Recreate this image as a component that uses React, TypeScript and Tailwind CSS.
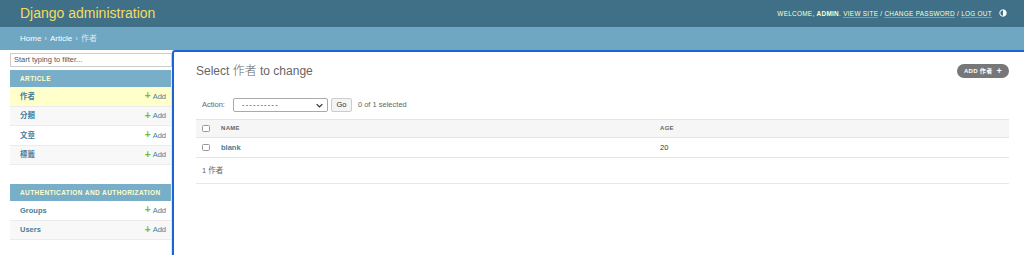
import React from 'react';

const font = { fontFamily: '"Liberation Sans", "Noto Sans CJK TC", Arial, sans-serif' };

const articleModels = ['作者', '分類', '文章', '標籤'];
const authModels = ['Groups', 'Users'];

function AddLink() {
  return (
    <span className="flex items-center gap-[2px] text-[7.5px] text-[#447e9b]">
      <span className="text-[10px] font-bold leading-none text-[#70bf2b]">+</span>
      Add
    </span>
  );
}

function ModelRow({ name, index, current }: { name: string; index: number; current?: boolean }) {
  const bg = current ? 'bg-[#ffffcc]' : index % 2 === 1 ? 'bg-[#f8f8f8]' : 'bg-white';
  return (
    <div className={`flex h-[19.5px] items-center justify-between border-b border-[#ececec] pl-[10px] pr-[5px] ${bg}`}>
      <span className="text-[7.5px] font-semibold text-[#447e9b]">{name}</span>
      <AddLink />
    </div>
  );
}

function ModuleHeader({ title }: { title: string }) {
  return (
    <div className="flex h-[17px] items-center bg-[#79aec8] pl-[10px] text-[6.5px] font-bold uppercase tracking-[0.4px] text-[#ffffcc]">
      {title}
    </div>
  );
}

function Checkbox() {
  return <span className="block h-[7.5px] w-[7.5px] rounded-[1.5px] border border-[#999] bg-white" />;
}

export default function App() {
  return (
    <div className="h-[255px] w-[1024px] overflow-hidden bg-white text-[#333]" style={font}>
      {/* Header */}
      <div className="flex h-[27px] items-center justify-between bg-[#3f7088] pl-[20px] pr-[17px]">
        <span className="text-[14px] text-[#f5dd5d]">Django administration</span>
        <div className="flex items-center gap-[7px]">
          <span className="text-[6.4px] uppercase tracking-[0.3px] text-[#ffffcc]">
            Welcome, <strong>admin</strong>.{' '}
            <span className="border-b border-white/30">View site</span> /{' '}
            <span className="border-b border-white/30">Change password</span> /{' '}
            <span className="border-b border-white/30">Log out</span>
          </span>
          <svg width="8" height="8" viewBox="0 0 16 16">
            <circle cx="8" cy="8" r="6.5" fill="none" stroke="#fff" strokeWidth="2" />
            <path d="M8 2 A6 6 0 0 1 8 14 Z" fill="#fff" />
          </svg>
        </div>
      </div>

      {/* Breadcrumbs */}
      <div className="flex h-[23px] items-center bg-[#6fa6c2] pl-[20px] text-[8px] text-white">
        Home<span className="mx-[3px] text-[#d6e8f1]">›</span>Article
        <span className="mx-[3px] text-[#d6e8f1]">›</span>
        <span className="text-[#d9eaf3]">作者</span>
      </div>

      <div className="flex h-[205px]">
        {/* Sidebar */}
        <div className="w-[172px] shrink-0 pl-[10px] pt-[3px]">
          <div className="flex h-[14px] items-center border border-[#ccc] px-[3px] text-[7.5px] text-[#555]">
            Start typing to filter...
          </div>
          <div className="mt-[3px] border-r border-[#e8e8e8]">
            <ModuleHeader title="Article" />
            {articleModels.map((m, i) => (
              <ModelRow key={m} name={m} index={i} current={i === 0} />
            ))}
            <div className="h-[19px]" />
            <ModuleHeader title="Authentication and Authorization" />
            {authModels.map((m, i) => (
              <ModelRow key={m} name={m} index={i} />
            ))}
            <div className="h-[20px]" />
          </div>
        </div>

        {/* Main content */}
        <div className="flex-1 rounded-tl-[3px] border-l-2 border-t-2 border-[#1a64d6] pl-[22px] pr-[15px]">
          <div className="mt-[10px] flex items-center justify-between">
            <h1 className="text-[12px] font-light text-[#666]">Select 作者 to change</h1>
            <span className="flex h-[14px] items-center gap-[4px] rounded-full bg-[#777] px-[7px] text-[6px] font-bold uppercase tracking-[0.3px] text-white">
              Add 作者
              <span className="text-[9px] leading-none">+</span>
            </span>
          </div>

          {/* Action bar */}
          <div className="mt-[18px] flex items-center pl-[6px] text-[7.5px] text-[#666]">
            <span>Action:</span>
            <div className="ml-[8px] flex h-[14px] w-[95px] items-center justify-between rounded-[2px] border border-[#aaa] bg-white pl-[8px] pr-[4px] text-[#333]">
              <span className="tracking-[1.2px]">----------</span>
              <svg width="7" height="5" viewBox="0 0 10 6">
                <path d="M1 1 L5 5 L9 1" fill="none" stroke="#333" strokeWidth="1.8" />
              </svg>
            </div>
            <span className="ml-[3px] flex h-[14px] w-[21px] items-center justify-center rounded-[2px] border border-[#ccc] bg-[#f4f4f4] text-[#333]">
              Go
            </span>
            <span className="ml-[6px] text-[#666]">0 of 1 selected</span>
          </div>

          {/* Results table */}
          <div className="mt-[7px]">
            <div className="grid h-[19px] grid-cols-[19px_445px_1fr] items-center border-y border-[#e4e4e4] bg-[#f6f6f6] text-[6px] font-bold uppercase tracking-[0.3px] text-[#666]">
              <span className="pl-[6px]"><Checkbox /></span>
              <span className="pl-[6px]">Name</span>
              <span>Age</span>
            </div>
            <div className="grid h-[20px] grid-cols-[19px_445px_1fr] items-center border-b border-[#e4e4e4] text-[7.5px]">
              <span className="pl-[6px]"><Checkbox /></span>
              <span className="pl-[6px] font-semibold text-[#447e9b]">blank</span>
              <span className="text-[#333]">20</span>
            </div>
          </div>
          <div className="flex h-[26px] items-center border-b border-[#e8e8e8] pl-[6px] text-[7.5px] text-[#666]">
            1 作者
          </div>
        </div>
      </div>
    </div>
  );
}
